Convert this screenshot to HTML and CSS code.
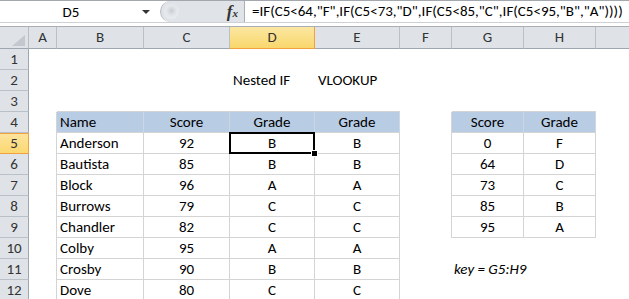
FILE: index.html
```html
<!DOCTYPE html>
<html lang="en">
<head>
    <meta charset="UTF-8">
    <title>Nested IF vs VLOOKUP</title>
    <link rel="stylesheet" href="styles.css">
</head>
<body>
    <!-- Formula bar -->
    <div class="formula-bar">
        <div class="name-box">
            <span class="name-text">D5</span>
            <span class="name-arrow"></span>
        </div>
        <div class="fx-area">
            <span class="grip"></span>
            <span class="fx"><i>f</i><small>x</small></span>
        </div>
        <div class="formula">=IF(C5&lt;64,"F",IF(C5&lt;73,"D",IF(C5&lt;85,"C",IF(C5&lt;95,"B","A"))))</div>
    </div>
    <div class="bar-gap"></div>

    <!-- Sheet -->
    <div class="sheet">
        <div class="row head-row">
            <div class="corner"><span class="corner-tri"></span></div>
            <div class="ch">A</div>
            <div class="ch">B</div>
            <div class="ch">C</div>
            <div class="ch sel">D</div>
            <div class="ch">E</div>
            <div class="ch">F</div>
            <div class="ch">G</div>
            <div class="ch">H</div>
            <div class="ch last"></div>
        </div>

        <div class="row">
            <div class="rh">1</div>
            <div class="c"></div><div class="c"></div><div class="c"></div><div class="c"></div>
            <div class="c"></div><div class="c"></div><div class="c"></div><div class="c"></div><div class="c"></div>
        </div>
        <div class="row">
            <div class="rh">2</div>
            <div class="c"></div><div class="c"></div><div class="c"></div>
            <div class="c">Nested IF</div>
            <div class="c">VLOOKUP</div>
            <div class="c"></div><div class="c"></div><div class="c"></div><div class="c"></div>
        </div>
        <div class="row">
            <div class="rh">3</div>
            <div class="c"></div>
            <div class="c above"></div><div class="c above"></div><div class="c above"></div><div class="c above"></div>
            <div class="c"></div>
            <div class="c above"></div><div class="c above"></div>
            <div class="c"></div>
        </div>
        <div class="row">
            <div class="rh">4</div>
            <div class="c edge"></div>
            <div class="c t hd">Name</div>
            <div class="c t hd mid">Score</div>
            <div class="c t hd mid">Grade</div>
            <div class="c t hd mid">Grade</div>
            <div class="c edge"></div>
            <div class="c t hd mid">Score</div>
            <div class="c t hd mid">Grade</div>
            <div class="c"></div>
        </div>
        <div class="row">
            <div class="rh sel">5</div>
            <div class="c edge"></div>
            <div class="c t">Anderson</div>
            <div class="c t mid">92</div>
            <div class="c t mid">B</div>
            <div class="c t mid">B</div>
            <div class="c edge"></div>
            <div class="c t mid">0</div>
            <div class="c t mid">F</div>
            <div class="c"></div>
        </div>
        <div class="row">
            <div class="rh">6</div>
            <div class="c edge"></div>
            <div class="c t">Bautista</div>
            <div class="c t mid">85</div>
            <div class="c t mid">B</div>
            <div class="c t mid">B</div>
            <div class="c edge"></div>
            <div class="c t mid">64</div>
            <div class="c t mid">D</div>
            <div class="c"></div>
        </div>
        <div class="row">
            <div class="rh">7</div>
            <div class="c edge"></div>
            <div class="c t">Block</div>
            <div class="c t mid">96</div>
            <div class="c t mid">A</div>
            <div class="c t mid">A</div>
            <div class="c edge"></div>
            <div class="c t mid">73</div>
            <div class="c t mid">C</div>
            <div class="c"></div>
        </div>
        <div class="row">
            <div class="rh">8</div>
            <div class="c edge"></div>
            <div class="c t">Burrows</div>
            <div class="c t mid">79</div>
            <div class="c t mid">C</div>
            <div class="c t mid">C</div>
            <div class="c edge"></div>
            <div class="c t mid">85</div>
            <div class="c t mid">B</div>
            <div class="c"></div>
        </div>
        <div class="row">
            <div class="rh">9</div>
            <div class="c edge"></div>
            <div class="c t">Chandler</div>
            <div class="c t mid">82</div>
            <div class="c t mid">C</div>
            <div class="c t mid">C</div>
            <div class="c edge"></div>
            <div class="c t mid">95</div>
            <div class="c t mid">A</div>
            <div class="c"></div>
        </div>
        <div class="row">
            <div class="rh">10</div>
            <div class="c edge"></div>
            <div class="c t">Colby</div>
            <div class="c t mid">95</div>
            <div class="c t mid">A</div>
            <div class="c t mid">A</div>
            <div class="c"></div><div class="c"></div><div class="c"></div><div class="c"></div>
        </div>
        <div class="row">
            <div class="rh">11</div>
            <div class="c edge"></div>
            <div class="c t">Crosby</div>
            <div class="c t mid">90</div>
            <div class="c t mid">B</div>
            <div class="c t mid">B</div>
            <div class="c"></div>
            <div class="c note">key = G5:H9</div>
            <div class="c"></div><div class="c"></div>
        </div>
        <div class="row">
            <div class="rh">12</div>
            <div class="c edge"></div>
            <div class="c t">Dove</div>
            <div class="c t mid">80</div>
            <div class="c t mid">C</div>
            <div class="c t mid">C</div>
            <div class="c"></div><div class="c"></div><div class="c"></div><div class="c"></div>
        </div>

        <!-- active cell D5 -->
        <div class="selection"><span class="fill-handle"></span></div>
    </div>
</body>
</html>
```

FILE: styles.css
```css
* {
    box-sizing: border-box;
}

body {
    margin: 0;
    width: 629px;
    height: 299px;
    overflow: hidden;
    background-color: #fff;
    color: #000;
    font-family: Carlito, Lato, 'Open Sans', sans-serif;
    font-size: 15px;
}

/* Formula bar */
.formula-bar {
    display: flex;
    height: 22px;
    border-top: 1px solid #a3a8ae;
}

.name-box {
    width: 160px;
    display: flex;
    align-items: center;
}

.name-text {
    width: 142px;
    text-align: center;
}

.name-arrow {
    width: 0;
    height: 0;
    border-left: 4px solid transparent;
    border-right: 4px solid transparent;
    border-top: 4px solid #333;
}

.fx-area {
    width: 85px;
    position: relative;
    display: flex;
    align-items: center;
    justify-content: flex-end;
    padding-right: 6px;
    background-color: #e0e3e7;
    border-left: 1px solid #b4b9bf;
    border-right: 1px solid #a9aeb5;
    border-radius: 11px 0 0 11px;
}

.grip {
    position: absolute;
    left: 3px;
    top: 3px;
    width: 15px;
    height: 15px;
    border-radius: 50%;
    background: radial-gradient(circle at 50% 45%, #c9cdd2 0, #e4e7ea 45%, #eef0f2 100%);
}

.fx {
    font-family: 'Liberation Serif', serif;
    font-weight: bold;
    color: #333;
    line-height: 1;
}

.fx i {
    font-size: 17px;
}

.fx small {
    font-size: 11px;
    font-style: italic;
}

.formula {
    flex: 1;
    padding-left: 7px;
    line-height: 21px;
    white-space: nowrap;
}

.bar-gap {
    height: 5px;
    border-top: 1px solid #cdd1d6;
    border-bottom: 1px solid #a9aeb4;
}

/* Sheet grid */
.sheet {
    position: relative;
}

.row {
    display: grid;
    grid-template-columns: 29px 28px 87px 86px 85px 85px 52px 72px 72px 1fr;
    height: 21px;
}

.head-row {
    height: 22px;
}

.corner,
.ch,
.rh {
    background-color: #dfe3e8;
    color: #333;
    text-align: center;
    line-height: 21px;
}

.corner {
    position: relative;
    border-right: 1px solid #b9bec5;
    border-bottom: 1px solid #9ea6b0;
}

.corner-tri {
    position: absolute;
    right: 3px;
    bottom: 2px;
    width: 13px;
    height: 11px;
    background-color: #c3c8ce;
    clip-path: polygon(100% 0, 100% 100%, 0 100%);
}

.ch {
    border-right: 1px solid #bac0c7;
    border-bottom: 1px solid #9ea6b0;
}

.ch.last {
    border-right: none;
}

.ch.sel {
    background: linear-gradient(#fbe7a2, #f9d76c);
    border-right-color: #f1a13e;
    border-bottom-color: #f1a13e;
}

.rh {
    line-height: 20px;
    border-right: 1px solid #9ea6b0;
    border-bottom: 1px solid #bac0c7;
}

.rh.sel {
    background: linear-gradient(#fde4a0, #fbd870);
    border-right-color: #f1a13e;
    border-bottom-color: #f1a13e;
    box-shadow: inset 0 1px 0 #f1a13e;
}

.c {
    padding: 0 3px;
    line-height: 21px;
    white-space: nowrap;
}

/* table borders */
.t {
    border-right: 1px solid #d4d4d4;
    border-bottom: 1px solid #d4d4d4;
    line-height: 20px;
}

.above {
    border-bottom: 1px solid #d4d4d4;
}

.edge {
    border-right: 1px solid #d4d4d4;
}

.hd {
    background-color: #b8cce4;
    border-right-color: #cdd7e3;
}

.mid {
    text-align: center;
}

.note {
    font-style: italic;
    padding-left: 2px;
}

.selection {
    position: absolute;
    left: 229px;
    top: 105px;
    width: 86px;
    height: 22px;
    border: 2px solid #000;
}

.fill-handle {
    position: absolute;
    right: -4px;
    bottom: -4px;
    width: 5px;
    height: 5px;
    background-color: #000;
    outline: 1px solid #fff;
}
```
